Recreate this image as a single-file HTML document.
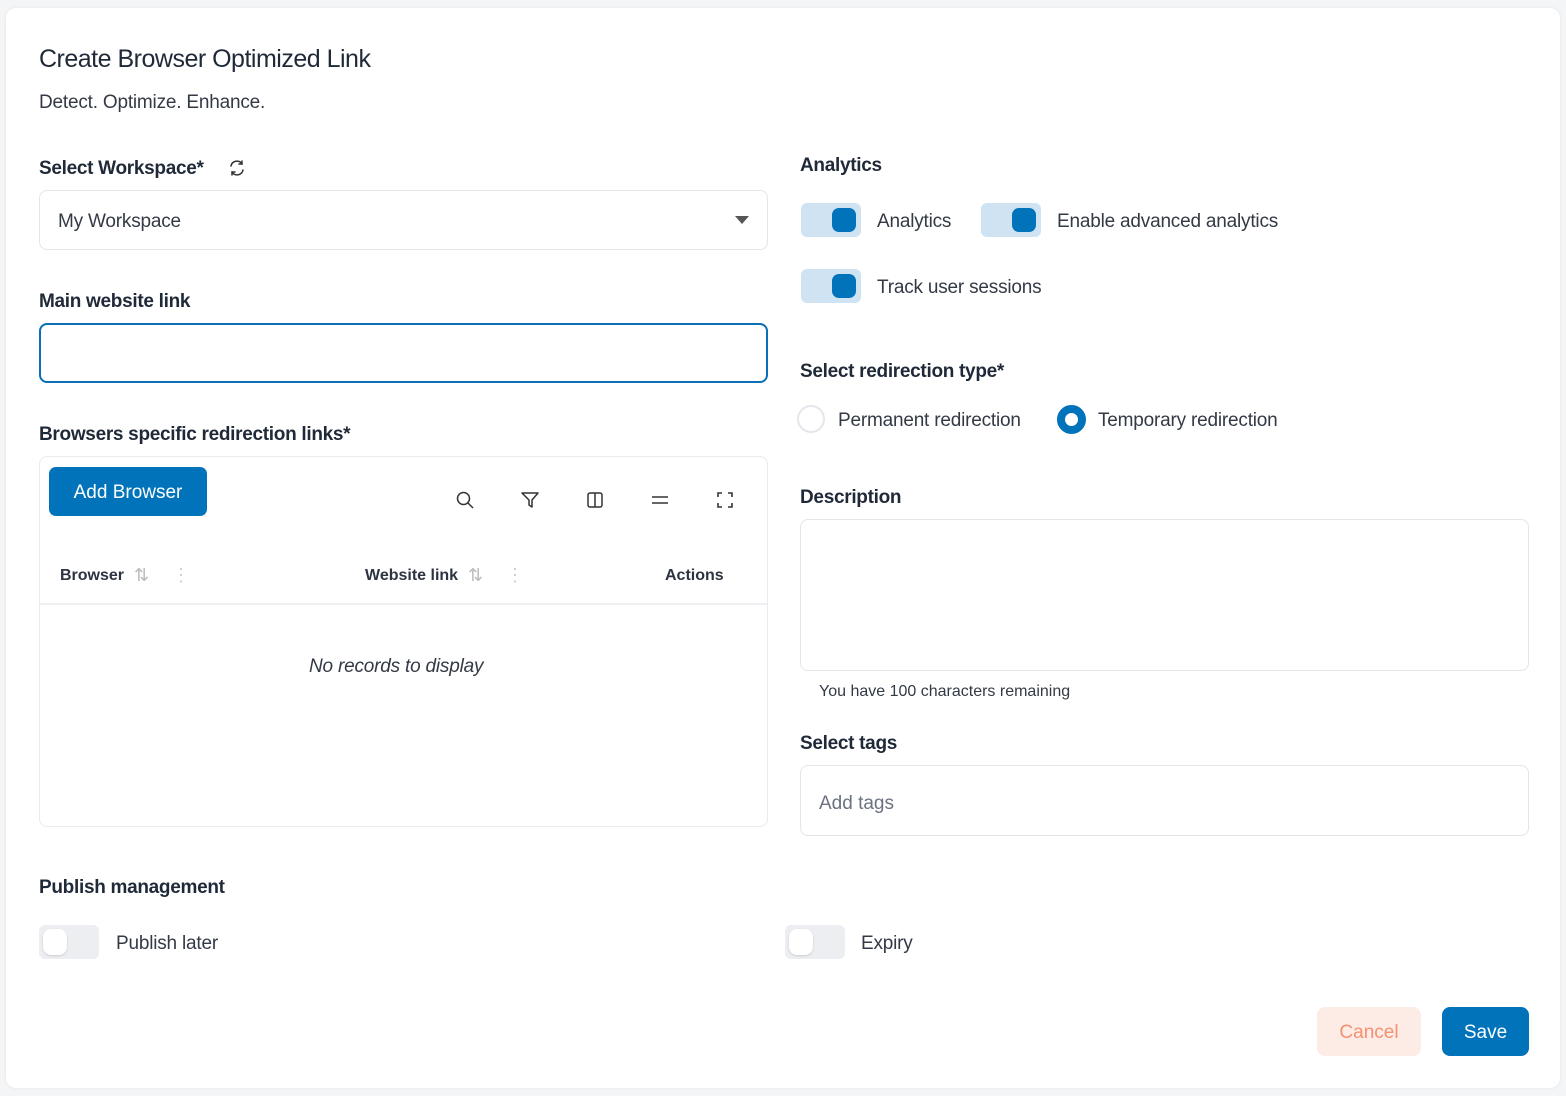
<!DOCTYPE html>
<html><head><meta charset="utf-8">
<style>
*{box-sizing:border-box;margin:0;padding:0}
body{width:1566px;height:1096px;background:#f4f5f7;font-family:"Liberation Sans",sans-serif;color:#1f2937;position:relative;overflow:hidden}
.card{position:absolute;left:6px;top:8px;width:1554px;height:1080px;background:#fff;border-radius:10px;box-shadow:0 0 3px rgba(0,0,0,.08)}
.a{position:absolute;white-space:nowrap}
.m{margin-top:2px}
.lbl{font-size:19px;font-weight:bold;color:#1f2937;letter-spacing:-.3px;margin-top:2px}
.t{font-size:19px;color:#333a45;letter-spacing:-.2px;margin-top:2px}
.box{position:absolute;border:1px solid #e2e5ea;border-radius:8px;background:#fff}
.tg{position:absolute;width:60px;height:34px;border-radius:6px;background:#cfe3f3}
.tg::after{content:"";position:absolute;right:5px;top:5px;width:24px;height:24px;border-radius:7px;background:#0073bb}
.tf{position:absolute;width:60px;height:34px;border-radius:6px;background:#eceef2}
.tf::after{content:"";position:absolute;left:4px;top:4px;width:24px;height:26px;border-radius:8px;background:#fff;box-shadow:0 1px 2px rgba(0,0,0,.15)}
.ic{position:absolute;width:20px;height:20px}
</style></head><body>
<div class="card"></div>
<div class="a m" style="left:39px;top:43px;font-size:25px;color:#1f2937;letter-spacing:-.5px">Create Browser Optimized Link</div>
<div class="a t" style="left:39px;top:90px">Detect. Optimize. Enhance.</div>

<div class="a lbl" style="left:39px;top:156px">Select Workspace*</div>
<svg class="ic" style="left:227px;top:158px" viewBox="0 0 20 20" fill="none" stroke="#333" stroke-width="1.5" stroke-linecap="round"><path d="M4 8a6 6 0 0 1 11-2M16 12a6 6 0 0 1-11 2"/><path d="M15 3v3h-3M5 17v-3h3"/></svg>
<div class="box" style="left:39px;top:190px;width:729px;height:60px"></div>
<div class="a t" style="left:58px;top:209px">My Workspace</div>
<svg class="a" style="left:735px;top:216px" width="14" height="8"><path d="M0 0h14L7 8z" fill="#555"/></svg>

<div class="a lbl" style="left:39px;top:289px">Main website link</div>
<div class="box" style="left:39px;top:323px;width:729px;height:60px;border:2px solid #0a6fb5"></div>

<div class="a lbl" style="left:39px;top:422px">Browsers specific redirection links*</div>
<div class="box" style="left:39px;top:456px;width:729px;height:371px;border-color:#e9ebef"></div>
<div class="a" style="left:49px;top:467px;width:158px;height:49px;background:#0073bb;border-radius:7px;color:#fff;font-size:19px;text-align:center;line-height:51px">Add Browser</div>
<svg class="ic" style="left:455px;top:490px" viewBox="0 0 20 20" fill="none" stroke="#333" stroke-width="1.5"><circle cx="8.5" cy="8.5" r="6"/><path d="M13 13l5 5"/></svg>
<svg class="ic" style="left:520px;top:490px" viewBox="0 0 20 20" fill="none" stroke="#333" stroke-width="1.5" stroke-linejoin="round"><path d="M2 3h16l-6 7v7l-3-2v-5z"/></svg>
<svg class="ic" style="left:585px;top:490px" viewBox="0 0 20 20" fill="none" stroke="#333" stroke-width="1.5"><rect x="3" y="3" width="14" height="14" rx="2"/><path d="M10 3v14"/></svg>
<svg class="ic" style="left:650px;top:490px" viewBox="0 0 20 20" fill="none" stroke="#333" stroke-width="1.5"><path d="M2 7h16M2 13h16"/></svg>
<svg class="ic" style="left:715px;top:490px" viewBox="0 0 20 20" fill="none" stroke="#333" stroke-width="1.6"><path d="M3 7V3h4M13 3h4v4M17 13v4h-4M7 17H3v-4"/></svg>
<div class="a m" style="left:60px;top:565px;font-size:16px;font-weight:bold;color:#2d3340">Browser</div>
<div class="a m" style="left:134px;top:563px;font-size:18px;color:#bbb">⇅</div>
<div class="a m" style="left:172px;top:563px;font-size:18px;color:#ccc">⋮</div>
<div class="a m" style="left:365px;top:565px;font-size:16px;font-weight:bold;color:#2d3340">Website link</div>
<div class="a m" style="left:468px;top:563px;font-size:18px;color:#bbb">⇅</div>
<div class="a m" style="left:506px;top:563px;font-size:18px;color:#ccc">⋮</div>
<div class="a m" style="left:665px;top:565px;font-size:16px;font-weight:bold;color:#2d3340">Actions</div>
<div class="a" style="left:40px;top:603px;width:727px;height:2px;background:#eef0f3"></div>
<div class="a t" style="left:309px;top:654px;font-style:italic">No records to display</div>

<div class="a lbl" style="left:800px;top:153px">Analytics</div>
<div class="tg" style="left:801px;top:203px"></div>
<div class="a t" style="left:877px;top:209px">Analytics</div>
<div class="tg" style="left:981px;top:203px"></div>
<div class="a t" style="left:1057px;top:209px">Enable advanced analytics</div>
<div class="tg" style="left:801px;top:269px"></div>
<div class="a t" style="left:877px;top:275px">Track user sessions</div>

<div class="a lbl" style="left:800px;top:359px">Select redirection type*</div>
<div class="a" style="left:797px;top:405px;width:28px;height:28px;border-radius:50%;border:2px solid #e3e6ea"></div>
<div class="a t" style="left:838px;top:408px">Permanent redirection</div>
<div class="a" style="left:1057px;top:405px;width:29px;height:29px;border-radius:50%;border:8px solid #0073bb;background:#fff"></div>
<div class="a t" style="left:1098px;top:408px">Temporary redirection</div>

<div class="a lbl" style="left:800px;top:485px">Description</div>
<div class="box" style="left:800px;top:519px;width:729px;height:152px"></div>
<div class="a m" style="left:819px;top:681px;font-size:16px;color:#333a45">You have 100 characters remaining</div>

<div class="a lbl" style="left:800px;top:731px">Select tags</div>
<div class="box" style="left:800px;top:765px;width:729px;height:71px"></div>
<div class="a m" style="left:819px;top:791px;font-size:19px;color:#6b7280">Add tags</div>

<div class="a lbl" style="left:39px;top:875px">Publish management</div>
<div class="tf" style="left:39px;top:925px"></div>
<div class="a t" style="left:116px;top:931px">Publish later</div>
<div class="tf" style="left:785px;top:925px"></div>
<div class="a t" style="left:861px;top:931px">Expiry</div>

<div class="a" style="left:1317px;top:1007px;width:104px;height:49px;background:#fdebe5;border-radius:8px;color:#f59073;font-size:19px;text-align:center;line-height:51px">Cancel</div>
<div class="a" style="left:1442px;top:1007px;width:87px;height:49px;background:#0073bb;border-radius:8px;color:#fff;font-size:19px;text-align:center;line-height:51px">Save</div>
</body></html>
